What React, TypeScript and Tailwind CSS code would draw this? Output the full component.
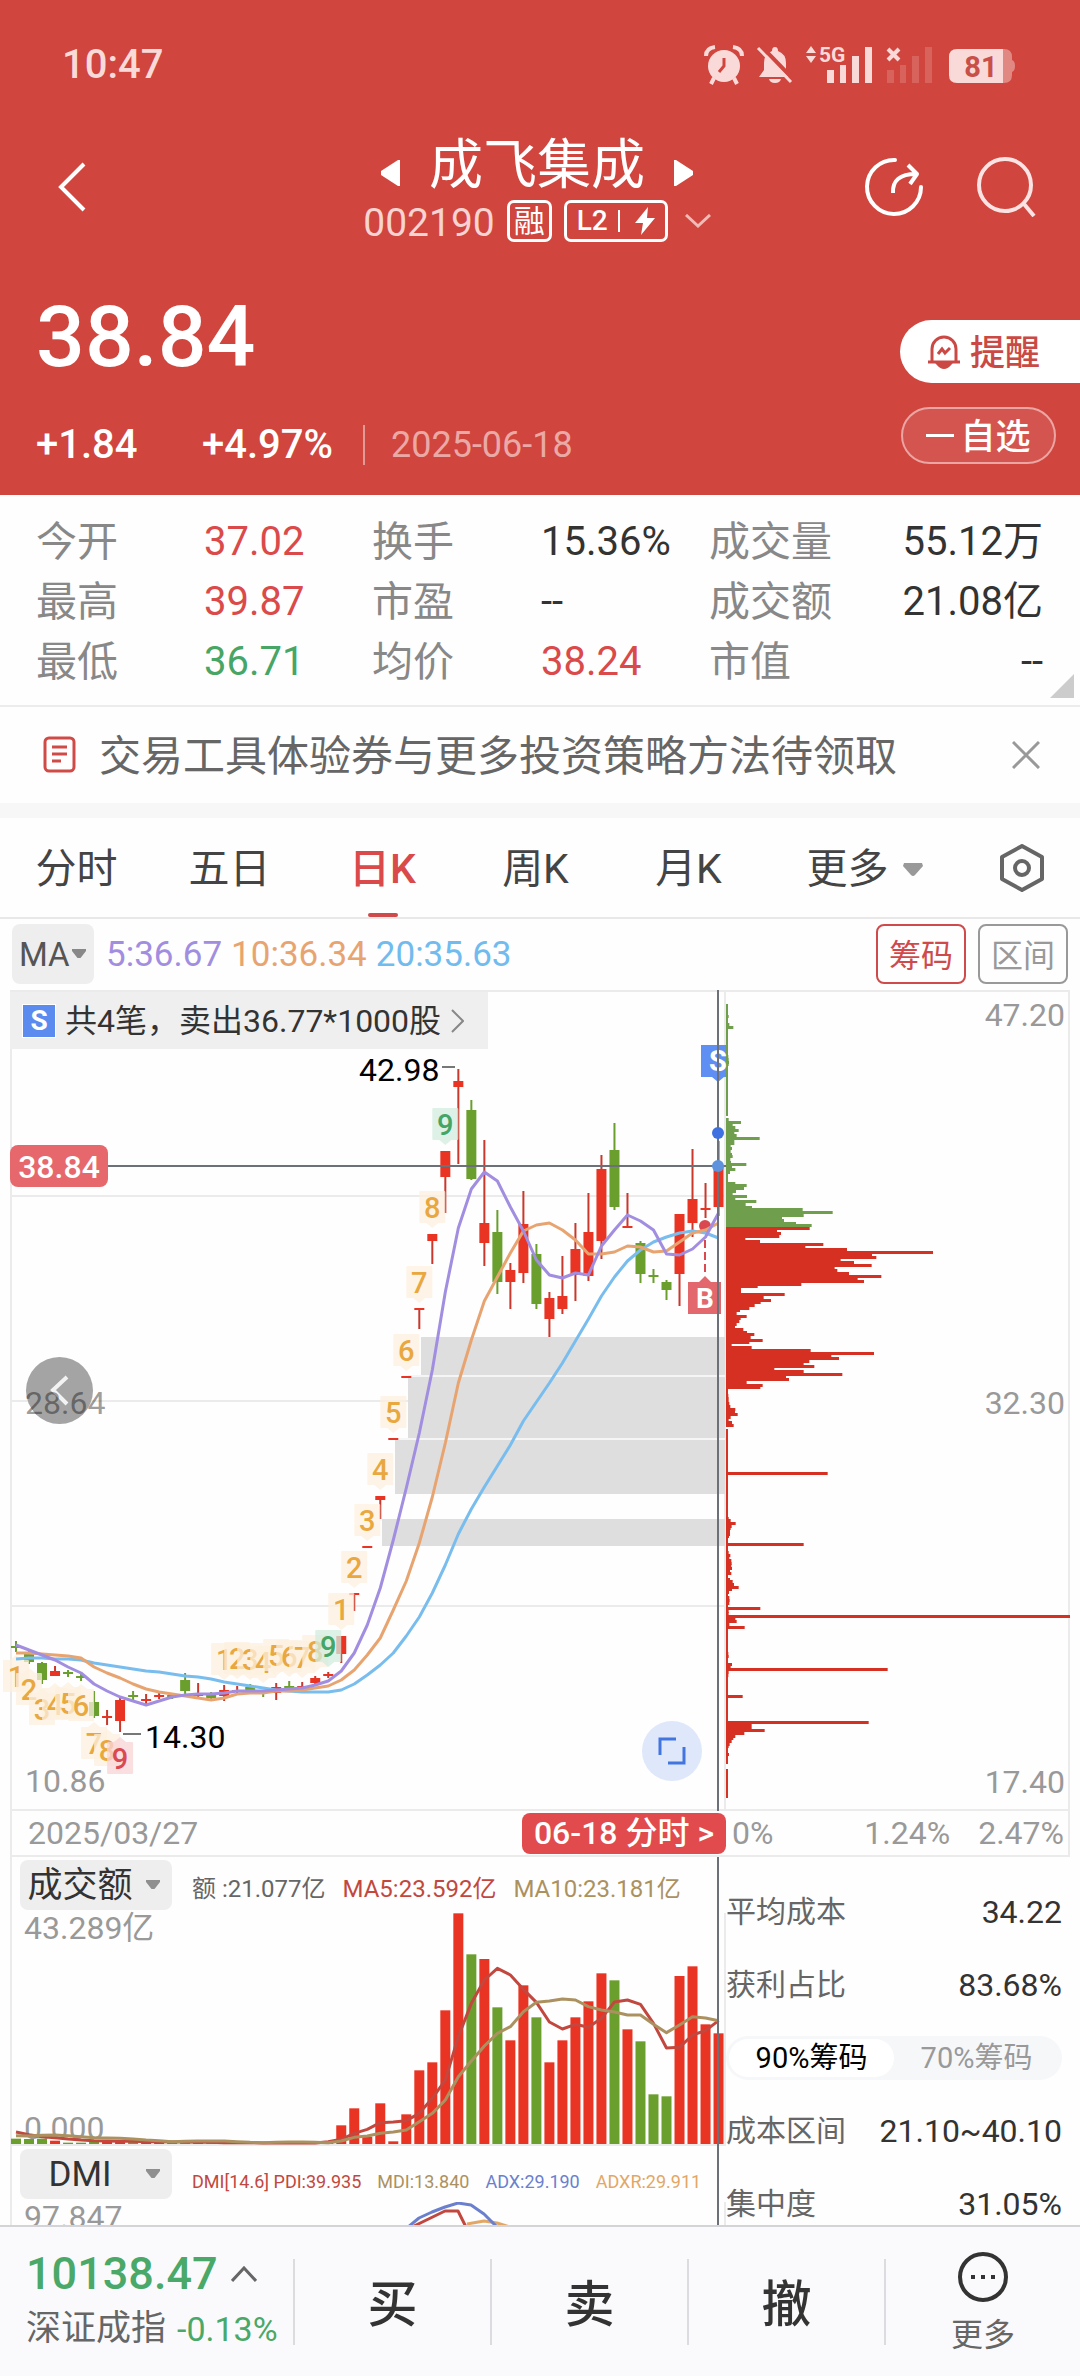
import type { ReactNode } from "react";

const RED = "#e93323";
const GREEN = "#6a9f2e";

const cx = (i: number) => 16 + 13.01 * i;
const toPoints = (ys: number[]) => ys.map((y, i) => `${cx(i)},${y}`).join(" ");

// direction, body top, body bottom, high, low
type Candle = [string, number, number, number, number];
const candles: Candle[] = [
  ["g", 1646, 1648, 1641, 1652], ["g", 1653, 1662, 1649, 1664], ["g", 1663, 1680, 1662, 1684],
  ["r", 1671, 1676, 1666, 1676], ["g", 1672, 1674, 1670, 1677], ["g", 1676, 1677, 1672, 1681],
  ["g", 1702, 1716, 1691, 1718], ["r", 1716, 1717, 1710, 1725], ["r", 1700, 1721, 1697, 1732],
  ["g", 1695, 1697, 1691, 1700], ["r", 1699, 1700, 1694, 1704], ["r", 1695, 1697, 1693, 1699],
  ["g", 1695, 1697, 1693, 1699], ["g", 1680, 1691, 1673, 1694], ["r", 1693, 1696, 1683, 1698],
  ["g", 1694, 1698, 1692, 1700], ["r", 1690, 1696, 1685, 1701], ["r", 1690, 1692, 1686, 1695],
  ["g", 1687, 1690, 1684, 1692], ["g", 1691, 1693, 1690, 1697], ["r", 1687, 1693, 1683, 1700],
  ["g", 1686, 1688, 1681, 1692], ["r", 1686, 1688, 1682, 1689], ["r", 1678, 1683, 1676, 1685],
  ["r", 1674, 1676, 1672, 1678], ["r", 1636, 1654, 1636, 1663], ["r", 1593, 1594, 1593, 1611],
  ["r", 1546, 1547, 1546, 1547], ["r", 1496, 1500, 1496, 1519], ["r", 1438, 1439, 1438, 1439],
  ["r", 1376, 1377, 1376, 1377], ["r", 1308, 1310, 1308, 1329], ["r", 1234, 1241, 1234, 1264],
  ["r", 1151, 1177, 1151, 1213], ["r", 1081, 1087, 1069, 1164], ["g", 1110, 1179, 1100, 1180],
  ["r", 1223, 1243, 1140, 1266], ["g", 1232, 1282, 1210, 1294], ["r", 1270, 1282, 1263, 1309],
  ["r", 1224, 1273, 1191, 1283], ["g", 1254, 1304, 1244, 1309], ["r", 1298, 1319, 1292, 1337],
  ["r", 1296, 1309, 1256, 1314], ["r", 1249, 1275, 1223, 1301], ["r", 1232, 1276, 1193, 1281],
  ["r", 1169, 1241, 1155, 1259], ["g", 1150, 1207, 1123, 1210], ["r", 1226, 1228, 1193, 1228],
  ["g", 1243, 1274, 1241, 1283], ["g", 1275, 1277, 1269, 1283], ["g", 1282, 1290, 1280, 1300],
  ["r", 1214, 1274, 1214, 1306], ["r", 1199, 1223, 1149, 1237], ["r", 1208, 1210, 1183, 1218],
  ["r", 1167, 1207, 1141, 1216],
];

const ma5 = [
  1645, 1650, 1655, 1660, 1667, 1673, 1684, 1691, 1697, 1701, 1705, 1701, 1697, 1695, 1694, 1694, 1693, 1691, 1691,
  1691, 1690, 1689, 1688, 1685, 1681, 1671, 1653, 1625, 1588, 1540, 1488, 1433, 1370, 1292, 1228, 1189, 1172, 1181,
  1207, 1231, 1260, 1275, 1278, 1273, 1275, 1246, 1230, 1215, 1221, 1230, 1254, 1255, 1249, 1237, 1213,
];
const ma10 = [
  1653, 1653, 1654, 1655, 1656, 1658, 1667, 1673, 1678, 1684, 1689, 1692, 1694, 1696, 1698, 1700, 1698, 1694, 1693,
  1693, 1691, 1691, 1690, 1688, 1686, 1680, 1670, 1655, 1638, 1610, 1581, 1543, 1497, 1443, 1383, 1340, 1301, 1277,
  1253, 1231, 1225, 1223, 1230, 1240, 1254, 1254, 1252, 1246, 1247, 1252, 1251, 1242, 1233, 1230, 1223,
];
const ma20 = [
  1659, 1658, 1658, 1659, 1659, 1660, 1663, 1665, 1667, 1669, 1671, 1672, 1674, 1676, 1677, 1679, 1682, 1684, 1686,
  1688, 1690, 1691, 1692, 1692, 1692, 1690, 1684, 1675, 1665, 1653, 1636, 1617, 1593, 1565, 1534, 1509, 1487, 1466,
  1445, 1421, 1402, 1383, 1363, 1341, 1319, 1296, 1277, 1261, 1250, 1242, 1237, 1233, 1231, 1233, 1238,
];

const gaps = [
  [421, 1337, 39],
  [408, 1377, 62],
  [395, 1440, 54],
  [382, 1519, 27],
];

// label, candle index, box top
type Count = [string, number, number];
const countsAbove: Count[] = [
  ["1", 16, 1643], ["2", 17, 1642], ["3", 18, 1643], ["4", 19, 1646], ["5", 20, 1639], ["6", 21, 1640],
  ["7", 22, 1641], ["8", 23, 1635], ["9", 24, 1630], ["1", 25, 1593], ["2", 26, 1551], ["3", 27, 1504],
  ["4", 28, 1453], ["5", 29, 1396], ["6", 30, 1334], ["7", 31, 1266], ["8", 32, 1191], ["9", 33, 1108],
];
const countsBelow: Count[] = [
  ["1", 0, 1660], ["2", 1, 1673], ["3", 2, 1693], ["4", 3, 1688], ["5", 4, 1687], ["6", 5, 1689],
  ["7", 6, 1727], ["8", 7, 1734], ["9", 8, 1742],
];

// price distribution: start of each run, then one width per step (thirds of a pixel)
const chipRuns: [number, number[]][] = [
  [109, [8]],
  [133, [10, 22]],
  [230, [7, 8, 9, 8]],
  [418, [8, 45, 20, 28, 38, 25, 32, 101, 25, 25, 14, 18, 14, 18, 20, 13, 15, 61, 18, 28, 12, 5, 6, 5, 28, 62, 54, 30, 20,
    63, 28, 91, 59, 78, 230, 320, 233, 168, 174, 210, 257, 251, 153, 165, 160, 58, 102, 292, 238, 363, 621, 438, 451,
    344, 384, 437, 326, 334, 369, 466, 395, 414, 226, 95, 45, 45, 176, 113, 135, 104, 86, 70, 42, 32, 62, 44, 40, 32,
    27, 52, 63, 85, 74, 110, 70, 17, 77, 254, 444, 316, 339, 250, 233, 265, 145, 233, 349, 180, 189, 62, 110, 103, 5,
    5, 7, 8, 8, 10, 13, 28, 27, 35, 14, 8, 18, 23]],
  [1479, [305]],
  [1614, [8, 14, 29, 17, 14, 12, 12, 9, 6, 5, 233, 5, 5, 8, 13, 10, 16, 17, 16, 18, 12, 16, 6, 12, 20, 24, 38, 18, 9, 6,
    10, 11, 10, 5, 103, 8, 8, 1032, 28, 32, 10, 56]],
  [2021, [7, 8]],
  [2053, [18, 14, 485, 8, 7]],
  [2148, [50]],
  [2228, [428, 77, 77, 116, 55, 28, 22, 17, 11, 8]],
  [2324, [9]],
];

const volumes: [string, number][] = [
  ["g", 896], ["g", 897], ["g", 896], ["r", 902], ["g", 908], ["g", 908], ["g", 906], ["r", 906], ["r", 906],
  ["g", 906], ["r", 908], ["r", 908], ["g", 908], ["g", 907], ["r", 908], ["g", 908], ["r", 908], ["r", 908],
  ["g", 909], ["g", 909], ["r", 909], ["r", 909], ["r", 909], ["r", 909], ["r", 909], ["r", 856], ["r", 805],
  ["r", 890], ["r", 790], ["r", 904], ["r", 823], ["r", 691], ["r", 667], ["r", 511], ["r", 220], ["g", 343],
  ["r", 357], ["g", 502], ["r", 601], ["r", 436], ["g", 532], ["r", 667], ["r", 601], ["r", 532], ["r", 484],
  ["r", 400], ["g", 421], ["r", 568], ["g", 604], ["g", 763], ["g", 769], ["r", 408], ["r", 379], ["r", 553],
  ["r", 580],
];
const volMa5 = [
  876, 884, 890, 893, 897, 900, 902, 903, 904, 904, 905, 905, 906, 906, 907, 907, 908, 908, 908, 909, 909, 909, 909,
  909, 905, 898, 880, 868, 848, 846, 842, 820, 775, 720, 590, 490, 420, 385, 405, 448, 487, 546, 567, 553, 562, 535,
  486, 480, 493, 550, 624, 622, 585, 572, 542,
];
const volMa10 = [
  887, 888, 886, 885, 887, 890, 893, 894, 895, 897, 900, 902, 905, 904, 903, 903, 903, 905, 907, 908, 907, 906, 906,
  907, 908, 903, 892, 888, 880, 876, 870, 845, 820, 780, 710, 663, 618, 580, 560, 515, 487, 483, 477, 480, 500, 510,
  516, 525, 525, 553, 578, 555, 530, 534, 542,
];
const volY = (v: number) => 1840 + v / 3;

function CountMark({ item, below }: { item: Count; below?: boolean }) {
  const [label, i, top] = item;
  const nine = label === "9";
  const ink = nine ? (below ? "#d9494f" : "#44a565") : "#e9a740";
  const fill = nine ? (below ? "#f9d5d8" : "#d3ede0") : "#fdf1e0";
  const x = cx(i);
  const tip = below
    ? `M${x - 6} ${top}L${x} ${top - 5}L${x + 6} ${top}Z`
    : `M${x - 6} ${top + 32}L${x} ${top + 37}L${x + 6} ${top + 32}Z`;
  return (
    <g>
      <g fill={fill} opacity="0.75">
        <rect x={x - 13} y={top} width="26" height="32" rx="1" />
        <path d={tip} />
      </g>
      <text x={x} y={top + 27} textAnchor="middle" fontSize="29" fontWeight="500" fill={ink}>
        {label}
      </text>
    </g>
  );
}

function KLineChart() {
  return (
    <svg viewBox="10 990 716 821" className="block w-full overflow-visible" role="img" aria-label="日K">
      <g stroke="#ebebeb" strokeWidth="2">
        <path d="M10 991H726M10 1196H726M10 1401H726M10 1606H726M10 1810H726M11 990V1811M725 990V1811" />
      </g>
      {gaps.map(([x, y, h]) => (
        <rect key={y} x={x} y={y} width={725 - x} height={h} fill="#dedede" />
      ))}
      <path d="M408 1376H725M395 1439H725" stroke="#f5f5f5" strokeWidth="2" />
      <circle cx="705" cy="1226" r="6" fill="#d9494f" />
      {candles.map(([d, t, b, hi, lo], i) => (
        <g key={i} fill={d === "r" ? RED : GREEN}>
          <rect x={cx(i) - 1} y={hi} width="2" height={lo - hi} fill={d === "r" ? "#c9382d" : GREEN} />
          <rect x={cx(i) - 5} y={t} width="10" height={Math.max(b - t, 2)} />
        </g>
      ))}
      {countsBelow.map((c) => (
        <CountMark key={c[1]} item={c} below />
      ))}
      {countsAbove.map((c) => (
        <CountMark key={c[1]} item={c} />
      ))}
      <g fill="none" strokeWidth="3" strokeLinejoin="round">
        <polyline points={toPoints(ma20)} stroke="#78bdee" />
        <polyline points={toPoints(ma10)} stroke="#e8a470" />
        <polyline points={toPoints(ma5)} stroke="#a18ee0" />
      </g>
      <g stroke="#777" strokeWidth="2">
        <path d="M442 1067H455M123 1734H141" />
      </g>
      <g fontSize="32" fill="#000">
        <text x="359" y="1081">42.98</text>
        <text x="145" y="1748">14.30</text>
      </g>
      <text x="25" y="1792" fontSize="32" fill="#999">10.86</text>

      <path d="M701 1045H726V1077H724L718 1082L712 1077H701Z" fill="#5f8ff2" />
      <text x="718" y="1071" textAnchor="middle" fontSize="29" fontWeight="700" fill="#fff">S</text>
      <path d="M705 1240V1274" stroke="#d9494f" strokeWidth="2" strokeDasharray="8 4" />
      <path d="M688 1282H699L705 1276L711 1282H721V1314H688Z" fill="#e2686e" />
      <text x="705" y="1308" textAnchor="middle" fontSize="28" fontWeight="700" fill="#fff">B</text>

      <path d="M10 1166H726M718 990V1811" stroke="#6b7079" strokeWidth="2" />
      <circle cx="718" cy="1133" r="6" fill="#3f70e2" />
      <circle cx="718" cy="1166" r="6" fill="#5f92dc" />
      <rect x="10" y="1145" width="98" height="42" rx="8" fill="#e6676c" />
      <text x="59" y="1178" textAnchor="middle" fontSize="32" fontWeight="500" fill="#fff">38.84</text>
    </svg>
  );
}

function ChipChart() {
  return (
    <svg viewBox="726 990 344 821" className="block w-full" role="img" aria-label="筹码分布">
      <path d="M726 991H1070M726 1810H1070M1069 990V1811" stroke="#ebebeb" strokeWidth="2" fill="none" />
      <path d="M727 1004V1116M727 1120V1228" stroke="#6f9f4c" strokeWidth="2" />
      <path d="M727 1228V1426M727 1429V1764M727 1769V1798" stroke="#d63324" strokeWidth="2" />
      {chipRuns.map(([start, widths]) =>
        widths.map((w, k) => {
          const y = start + 7.97 * k;
          return (
            <rect
              key={`${start}-${k}`}
              x="726"
              y={Math.round(980 + (y - 4) / 3)}
              width={w / 3}
              height="3"
              fill={y < 742 ? "#6f9f4c" : "#d63022"}
            />
          );
        }),
      )}
      <g fontSize="32" fill="#999" textAnchor="end">
        <text x="1065" y="1026">47.20</text>
        <text x="1065" y="1414">32.30</text>
        <text x="1065" y="1793">17.40</text>
      </g>
    </svg>
  );
}

function VolumeChart() {
  return (
    <svg viewBox="10 1913 716 233" className="block w-full overflow-visible" role="img" aria-label="成交额">
      <path d="M10 2145H726M11 1913V2146M725 1913V2146" stroke="#ebebeb" strokeWidth="2" />
      {volumes.map(([d, v], i) => (
        <rect key={i} x={cx(i) - 5} y={volY(v)} width="10" height={2144 - volY(v)} fill={d === "r" ? RED : GREEN} />
      ))}
      <g fontSize="32" fill="#999">
        <text x="24" y="1939">43.289亿</text>
        <text x="24" y="2139">0.000</text>
      </g>
      <g fill="none" strokeWidth="3" strokeLinejoin="round">
        <polyline points={toPoints(volMa5.map(volY))} stroke="#c2483f" />
        <polyline points={toPoints(volMa10.map(volY))} stroke="#ac9160" />
      </g>
    </svg>
  );
}

function DmiChart() {
  return (
    <svg viewBox="10 2201 716 120" className="block w-full" role="img" aria-label="DMI">
      <path d="M11 2201V2321M725 2201V2321" stroke="#ebebeb" strokeWidth="2" />
      <text x="24" y="2227" fontSize="32" fill="#999">97.847</text>
      <g fill="none" strokeWidth="3" strokeLinejoin="round">
        <polyline points="467,2223 484,2220 497,2222 510,2226 530,2236" stroke="#e3a765" />
        <polyline points="406,2231 414,2225 445,2210 458,2210 466,2226 470,2236" stroke="#c2483f" />
        <polyline points="402,2231 419,2217 432,2211 445,2206 458,2202 471,2204 484,2213 497,2226 504,2236" stroke="#6a80cf" />
      </g>
    </svg>
  );
}

function IndicatorSelect({ label, value, children }: { label: string; value: string; children?: ReactNode }) {
  return (
    <div className="flex h-[56px] items-center border-l-2 border-[#ebebeb] pl-2">
      <div className="relative h-[50px] w-[152px] shrink-0 rounded-lg bg-[#eeeeee]">
        <select
          aria-label={label}
          className="h-full w-full appearance-none rounded-lg bg-transparent pt-[2px] pr-8 text-center text-[35px] leading-[48px] text-[#333]"
        >
          <option>{value}</option>
        </select>
        <svg viewBox="0 0 14 9" className="pointer-events-none absolute top-[20px] right-[12px] w-[14px] fill-[#8f8f8f]">
          <path d="M0 0H14V2L8.500 9H5.500L0 2Z" />
        </svg>
      </div>
      {children}
    </div>
  );
}

function StatusBar() {
  return (
    <div className="flex h-[130px] items-center justify-between pr-[64px] pl-[62px] text-[#f9dad8]">
      <span className="text-[40px] leading-none font-medium">10:47</span>
      <svg viewBox="704 44 312 42" className="h-[42px] w-[312px]" fill="currentColor" role="img" aria-label="81%">
        <circle cx="724" cy="66" r="16" />
        <path d="M706 56Q706 48 715 47M742 56Q742 48 733 47" stroke="currentColor" strokeWidth="4" fill="none" />
        <path d="M714 78L711 84M734 78L737 84" stroke="currentColor" strokeWidth="4" />
        <path d="M724 58V66L719 72" stroke="#d0453e" strokeWidth="3" fill="none" />
        <path d="M775 47Q778 47 778 51Q786 54 786 63V70L791 77H759L764 70V63Q764 54 772 51Q772 47 775 47Z" />
        <path d="M769 79H781Q780 83 775 83Q770 83 769 79Z" />
        <path d="M761 46L794 80" stroke="#d0453e" strokeWidth="4" />
        <path d="M758 48L791 82" stroke="currentColor" strokeWidth="3" />
        <path d="M806 53L811 46L816 53ZM806 56L811 63L816 56Z" />
        <text x="819" y="62" fontSize="21" fontWeight="700">5G</text>
        <path d="M827 70H834V83H827ZM840 65H846V83H840ZM852 56H859V83H852ZM865 47H872V83H865Z" />
        <path d="M888 49L899 60M899 49L888 60" stroke="currentColor" strokeWidth="4" />
        <path opacity="0.2" d="M887 70H894V83H887ZM900 65H906V83H900ZM912 56H919V83H912ZM925 47H932V83H925Z" />
        <path opacity="0.45" d="M1000 49H1004Q1012 49 1012 57V60Q1015 61 1015 66Q1015 71 1012 72V75Q1012 83 1004 83H1000Z" />
        <path d="M957 49H1003V83H957Q949 83 949 75V57Q949 49 957 49Z" />
        <text x="981" y="77" textAnchor="middle" fontSize="29" fontWeight="700" fill="#c94f49">81</text>
      </svg>
    </div>
  );
}

function Header() {
  return (
    <header className="shrink-0 bg-[#d0453e] text-white">
      <StatusBar />
      <nav className="grid h-[112px] grid-cols-[1fr_auto_1fr] items-center pr-[44px] pl-[38px]">
        <button aria-label="返回" className="ml-[20px] justify-self-start">
          <svg viewBox="0 0 28 50" className="h-[50px] w-[28px] fill-none stroke-white stroke-[4]">
            <path d="M26 2L3 25L26 48" />
          </svg>
        </button>
        <div className="flex flex-col items-center gap-[3px] pt-[6px]">
          <div className="flex h-[60px] items-center gap-[28px]">
            <button aria-label="上一只">
              <svg viewBox="0 0 20 26" className="mt-[14px] h-[26px] w-[20px] fill-white">
                <path d="M19 0V26H17L0 15V11L17 0Z" />
              </svg>
            </button>
            <h1 className="text-[54px] leading-[60px]">成飞集成</h1>
            <button aria-label="下一只">
              <svg viewBox="0 0 20 26" className="mt-[14px] h-[26px] w-[20px] fill-white">
                <path d="M1 0V26H3L20 15V11L3 0Z" />
              </svg>
            </button>
          </div>
          <div className="flex h-[44px] items-center">
            <span className="pt-1 text-[39px] leading-none text-[#f7d3d1]">002190</span>
            <span className="ml-[12px] flex h-[42px] w-[45px] items-center justify-center rounded-[7px] border-[3px] border-white text-[31px] leading-none">
              融
            </span>
            <button className="ml-[12px] flex h-[42px] w-[104px] items-center justify-center gap-[10px] rounded-[7px] border-[3px] border-white text-[28px] leading-none font-medium">
              L2
              <span className="h-[22px] w-[2px] bg-white" />
              <svg viewBox="0 0 20 28" className="ml-[5px] h-[28px] w-[20px] fill-white">
                <path d="M13 0L0 16H8L6 28L20 11H12Z" />
              </svg>
            </button>
            <svg viewBox="0 0 26 14" className="ml-[17px] h-[14px] w-[26px] fill-none stroke-[#f0bab7] stroke-[3]">
              <path d="M1 1L13 12L25 1" />
            </svg>
          </div>
        </div>
        <div className="flex items-center gap-[52px] justify-self-end">
          <button aria-label="分享">
            <svg viewBox="0 0 60 60" className="h-[60px] w-[60px] fill-none stroke-white stroke-[4]">
              <path d="M31 3A27 27 0 1 0 57 30" strokeLinecap="round" />
              <path d="M29 36Q28 17 52 17M44 8L53 17L46 27" strokeLinejoin="round" />
            </svg>
          </button>
          <button aria-label="搜索">
            <svg viewBox="0 0 60 60" className="h-[60px] w-[60px] fill-none stroke-[#fae3e2] stroke-[4]">
              <circle cx="29" cy="28" r="26" />
              <path d="M48 47L58 59" />
            </svg>
          </button>
        </div>
      </nav>
      <div className="flex justify-between pb-[30px] pl-[36px]">
        <div className="pt-[52px]">
          <div className="text-[86px] leading-[86px] font-medium">38.84</div>
          <div className="mt-[45px] flex h-[40px] items-center text-[40px] leading-none font-medium">
            <span className="w-[166px]">+1.84</span>
            <span>+4.97%</span>
            <span className="ml-[30px] h-[40px] w-[2px] bg-[#e39a96]" />
            <span className="ml-[26px] text-[36px] font-normal text-[#eba9a6]">2025-06-18</span>
          </div>
        </div>
        <div className="flex flex-col items-end gap-[24px] pt-[78px]">
          <button className="flex h-[63px] items-center gap-[9px] rounded-l-full bg-white pr-[40px] pl-[27px] text-[35px] leading-none font-medium text-[#cb4944]">
            <svg viewBox="0 0 34 34" className="h-[34px] w-[34px] fill-none stroke-[#cb4944] stroke-[3]">
              <path d="M5 27V14A12 12 0 0 1 29 14V27M1 27H33" strokeLinejoin="round" />
              <path d="M11 19L15 14L18 18L23 13" />
              <path d="M11 29Q17 36 23 29Z" fill="#cb4944" />
            </svg>
            <span className="pt-1">提醒</span>
          </button>
          <button className="mr-[24px] flex h-[57px] w-[155px] items-center justify-center gap-[6px] rounded-full border-2 border-[#eba5a2] bg-[#d4554f] text-[35px] leading-none font-medium">
            <span className="h-[3px] w-[28px] bg-white" />
            <span className="pt-1">自选</span>
          </button>
        </div>
      </div>
    </header>
  );
}

const stats = [
  ["今开", "37.02", "text-[#da4a4a]", "换手", "15.36%", "text-[#333]", "成交量", "55.12万"],
  ["最高", "39.87", "text-[#da4a4a]", "市盈", "--", "text-[#333]", "成交额", "21.08亿"],
  ["最低", "36.71", "text-[#47a565]", "均价", "38.24", "text-[#da4a4a]", "市值", "--"],
];

function Stats() {
  return (
    <section className="relative border-b-2 border-[#ececec] pt-[17px] pr-[37px] pb-[13px] pl-[36px]">
      <table className="w-full table-fixed text-left text-[40px] leading-[60px]">
        <colgroup>
          <col className="w-[168px]" />
          <col className="w-[168px]" />
          <col className="w-[169px]" />
          <col className="w-[168px]" />
          <col />
          <col />
        </colgroup>
        <tbody>
          {stats.map((r) => (
            <tr key={r[0]}>
              <th className="p-0 text-[41px] font-normal text-[#888]">{r[0]}</th>
              <td className={`p-0 ${r[2]}`}>{r[1]}</td>
              <th className="p-0 text-[41px] font-normal text-[#888]">{r[3]}</th>
              <td className={`p-0 ${r[5]}`}>{r[4]}</td>
              <th className="p-0 text-[41px] font-normal whitespace-nowrap text-[#888]">{r[6]}</th>
              <td className="p-0 text-right whitespace-nowrap text-[#333]">{r[7]}</td>
            </tr>
          ))}
        </tbody>
      </table>
      <svg viewBox="0 0 24 24" className="absolute right-[6px] bottom-[7px] w-[24px] fill-[#cccccc]">
        <path d="M24 0V24H0Z" />
      </svg>
    </section>
  );
}

function Notice() {
  return (
    <section className="flex h-[96px] items-center pr-[40px] pb-[1px] pl-[43px]">
      <svg viewBox="0 0 33 37" className="h-[37px] w-[33px] fill-none stroke-[#cf4b48] stroke-[3]">
        <rect x="2" y="2" width="29" height="33" rx="4" />
        <path d="M9 11H24M9 18H24M9 25H18" />
      </svg>
      <a href="#notice" className="ml-[23px] flex-1 pt-1 text-[42px] leading-[60px] whitespace-nowrap text-[#666]">
        交易工具体验券与更多投资策略方法待领取
      </a>
      <button aria-label="关闭">
        <svg viewBox="0 0 28 28" className="h-[28px] w-[28px] stroke-[#999] stroke-[3]">
          <path d="M1 1L27 27M27 1L1 27" />
        </svg>
      </button>
    </section>
  );
}

const tabs = ["分时", "五日", "日K", "周K", "月K"];

function Tabs() {
  return (
    <nav className="flex h-[101px] border-b-2 border-[#e8e8e8] text-[41px] text-[#444]" role="tablist">
      {tabs.map((t) => (
        <button
          key={t}
          role="tab"
          aria-selected={t === "日K"}
          className={
            t === "日K"
              ? "relative flex-[153] pt-1 font-medium text-[#da4a4a] after:absolute after:bottom-0 after:left-1/2 after:h-[4px] after:w-[30px] after:-translate-x-1/2 after:rounded-full after:bg-[#cf4b4b]"
              : "flex-[153] pt-1"
          }
        >
          {t}
        </button>
      ))}
      <button className="flex flex-[199] items-center justify-center gap-[14px] pt-1">
        更多
        <svg viewBox="0 0 20 13" className="h-[13px] w-[20px] fill-[#999]">
          <path d="M1 0H19L20 3L12 12Q10 14 8 12L0 3Z" />
        </svg>
      </button>
      <button aria-label="设置" className="flex flex-[116] items-center justify-center">
        <svg viewBox="0 0 44 48" className="h-[48px] w-[44px] fill-none stroke-[#666] stroke-[4]">
          <path d="M22 2L42 13V35L22 46L2 35V13Z" strokeLinejoin="round" />
          <circle cx="22" cy="24" r="7" />
        </svg>
      </button>
    </nav>
  );
}

function MaRow() {
  return (
    <section className="flex h-[71px] items-center pr-[12px] pb-[1px] pl-[12px] text-[35px] leading-none">
      <div className="relative h-[60px] w-[82px] rounded-lg bg-[#eeeeee]">
        <select
          aria-label="均线"
          className="h-full w-full appearance-none rounded-lg bg-transparent pl-[7px] text-[33px] text-[#555]"
        >
          <option>MA</option>
        </select>
        <svg viewBox="0 0 14 9" className="pointer-events-none absolute top-[25px] right-[8px] w-[14px] fill-[#888]">
          <path d="M0 0H14V2L8.500 9H5.500L0 2Z" />
        </svg>
      </div>
      <span className="ml-[12px] text-[#a18ee0]">5:36.67</span>
      <span className="ml-[9px] text-[#e8a470]">10:36.34</span>
      <span className="ml-[9px] text-[#71bbee]">20:35.63</span>
      <button className="ml-auto h-[60px] w-[90px] rounded-lg border-2 border-[#cf4b4b] pt-1 text-[32px] text-[#cf4b4b]">
        筹码
      </button>
      <button className="ml-[12px] h-[60px] w-[90px] rounded-lg border-2 border-[#999] pt-1 text-[32px] text-[#999]">
        区间
      </button>
    </section>
  );
}

function LeftColumn() {
  return (
    <div className="relative min-w-0">
      <div className="relative">
        <KLineChart />
        <a
          href="#trades"
          className="absolute top-[2px] left-0 flex h-[57px] w-[478px] items-center bg-[#efefef] pl-[12px] text-[32px] leading-none whitespace-nowrap text-[#333]"
        >
          <span className="mr-[9px] flex h-[34px] w-[34px] items-center justify-center border border-white bg-[#5b8bee] text-[28px] font-bold text-white">
            S
          </span>
          共4笔，卖出36.77*1000股
          <svg viewBox="0 0 13 24" className="ml-[10px] h-[24px] w-[13px] fill-none stroke-[#888] stroke-2">
            <path d="M1 1L12 12L1 23" />
          </svg>
        </a>
        <button
          aria-label="向左"
          className="absolute top-[367px] left-[16px] h-[67px] w-[67px] rounded-full bg-[#a4a4a4]"
        >
          <svg viewBox="0 0 67 67" className="fill-none stroke-[#f2f2f2] stroke-[4]">
            <path d="M41 20L27 33L41 47" />
          </svg>
        </button>
        <span className="pointer-events-none absolute top-[397px] left-[15px] text-[32px] leading-none text-black/40">
          28.64
        </span>
        <button
          aria-label="展开"
          className="absolute right-[24px] bottom-[30px] h-[60px] w-[60px] rounded-full bg-[#dfe7fb]"
        >
          <svg viewBox="0 0 60 60" className="fill-none stroke-[#4375df] stroke-[3]">
            <path d="M34 18H18V34M42 26V42H26" />
          </svg>
        </button>
      </div>
      <div className="flex h-[46px] items-center justify-between border-b-2 border-l-2 border-[#ebebeb] pl-[16px]">
        <span className="text-[32px] leading-none text-[#999]">2025/03/27</span>
        <button className="h-[41px] w-[204px] rounded-lg bg-[#e14b4e] text-[32px] leading-none font-medium whitespace-nowrap text-white">
          06-18 分时 &gt;
        </button>
      </div>
      <div className="relative">
        <IndicatorSelect label="副图一" value="成交额">
          <div className="mt-[8px] ml-[20px] flex gap-[17px] text-[24px] leading-none whitespace-nowrap">
            <span className="text-[#666]">额 :21.077亿</span>
            <span className="text-[#c2483f]">MA5:23.592亿</span>
            <span className="text-[#ac9160]">MA10:23.181亿</span>
          </div>
        </IndicatorSelect>
        <VolumeChart />
        <IndicatorSelect label="副图二" value="DMI">
          <div className="mt-[16px] ml-[20px] flex gap-[16px] text-[18px] leading-none whitespace-nowrap">
            <span className="text-[#c2483f]">DMI[14.6] PDI:39.935</span>
            <span className="text-[#ac9160]">MDI:13.840</span>
            <span className="text-[#6a80cf]">ADX:29.190</span>
            <span className="text-[#e3a765]">ADXR:29.911</span>
          </div>
        </IndicatorSelect>
        <DmiChart />
        <div className="absolute top-0 right-[7px] bottom-0 w-[2px] bg-[#6b7079]" />
      </div>
    </div>
  );
}

function InfoRow({ label, value }: { label: string; value: string }) {
  return (
    <div className="flex items-center justify-between leading-[44px]">
      <dt className="text-[30px] text-[#666]">{label}</dt>
      <dd className="text-[32px] text-[#333]">{value}</dd>
    </div>
  );
}

function RightColumn() {
  return (
    <div className="min-w-0">
      <ChipChart />
      <div className="flex h-[46px] items-center justify-between border-r-2 border-b-2 border-[#ebebeb] pr-[4px] pl-[6px] text-[32px] leading-none text-[#999]">
        <span className="flex-1">0%</span>
        <span className="mr-[28px]">1.24%</span>
        <span>2.47%</span>
      </div>
      <dl className="flex flex-col gap-[29px] pt-[33px] pr-[8px]">
        <InfoRow label="平均成本" value="34.22" />
        <InfoRow label="获利占比" value="83.68%" />
        <div className="flex h-[44px] rounded-full bg-[#f6f7f9] p-[3px] text-[29px] leading-none">
          <button className="flex-1 rounded-full bg-white text-black">90%筹码</button>
          <button className="flex-1 rounded-full text-[#999]">70%筹码</button>
        </div>
        <InfoRow label="成本区间" value="21.10~40.10" />
        <InfoRow label="集中度" value="31.05%" />
      </dl>
    </div>
  );
}

function BottomBar() {
  return (
    <footer className="grid h-[151px] shrink-0 grid-cols-[295fr_197fr_197fr_197fr_194fr] items-start border-t-2 border-[#d4d4d8] bg-[#fafafc] pt-[32px]">
      <button className="flex h-[86px] flex-col justify-between border-r-2 border-[#dcdce0] pl-[26px] text-left whitespace-nowrap">
        <span className="flex items-center gap-[13px] text-[45px] leading-[30px] font-medium text-[#4aa868]">
          10138.47
          <svg viewBox="0 0 26 16" className="h-[16px] w-[26px] fill-none stroke-[#666] stroke-[3]">
            <path d="M1 15L13 2L25 15" />
          </svg>
        </span>
        <span className="flex items-center gap-[11px] text-[35px] leading-[32px] text-[#666]">
          深证成指 <span className="text-[34px] text-[#4aa868]">-0.13%</span>
        </span>
      </button>
      {["买", "卖", "撤"].map((t) => (
        <button
          key={t}
          className="h-[86px] border-r-2 border-[#dcdce0] pt-[6px] text-[50px] leading-none font-medium text-[#333]"
        >
          {t}
        </button>
      ))}
      <button className="-mt-[8px] flex flex-col items-center text-[32px] leading-[40px] text-[#666]">
        <svg viewBox="0 0 52 52" className="h-[52px] w-[52px] fill-none stroke-[#333] stroke-[4]">
          <circle cx="26" cy="26" r="23" />
          <path d="M14 26H18M24 26H28M34 26H38" />
        </svg>
        <span className="mt-[12px]">更多</span>
      </button>
    </footer>
  );
}

export default function App() {
  return (
    <div className="flex h-screen flex-col bg-[#fefefe] font-[Roboto,'Noto_Sans_CJK_SC',sans-serif]">
      <Header />
      <main className="min-h-0 flex-1 overflow-hidden">
        <Stats />
        <Notice />
        <div className="h-[15px] bg-[#f7f7f7]" />
        <Tabs />
        <MaRow />
        <section className="mx-[10px] grid grid-cols-[716fr_344fr]">
          <LeftColumn />
          <RightColumn />
        </section>
      </main>
      <BottomBar />
    </div>
  );
}
